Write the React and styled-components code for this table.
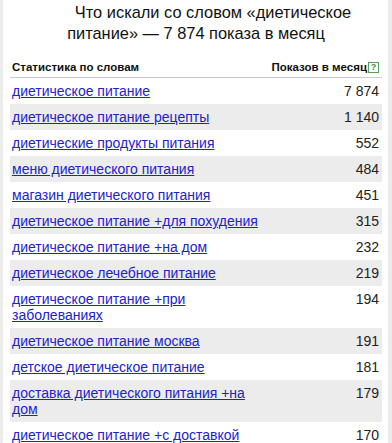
import React from "react";
import styled, { createGlobalStyle } from "styled-components";

const rows = [
  ["диетическое питание", "7 874"],
  ["диетическое питание рецепты", "1 140"],
  ["диетические продукты питания", "552"],
  ["меню диетического питания", "484"],
  ["магазин диетического питания", "451"],
  ["диетическое питание +для похудения", "315"],
  ["диетическое питание +на дом", "232"],
  ["диетическое лечебное питание", "219"],
  ["диетическое питание +при заболеваниях", "194"],
  ["диетическое питание москва", "191"],
  ["детское диетическое питание", "181"],
  ["доставка диетического питания +на дом", "179"],
  ["диетическое питание +с доставкой", "170"],
];

const GlobalStyle = createGlobalStyle`
  html, body {
    margin: 0;
    padding: 0;
    background: #ebebeb;
  }
  body {
    font-family: "Liberation Sans", Arial, sans-serif;
  }
`;

const Panel = styled.div`
  margin: 0 4px 0 3px;
  background: #fff;
  min-height: 443px;
  padding: 0 6px 0 7px;
  box-sizing: border-box;
`;

const Title = styled.h2`
  margin: 0;
  padding: 2px 0 16px;
  font-weight: normal;
  font-size: 16.4px;
  line-height: 21px;
  color: #111;
  text-align: center;
`;

const TitleLine = styled.span`
  display: block;
  padding-left: ${(p) => p.$shift || 0}px;
`;

const Table = styled.div`
  display: flex;
  flex-direction: column;
`;

const HeadRow = styled.div`
  display: flex;
  justify-content: space-between;
  align-items: center;
  padding: 0 3px 2px 2px;
  border-bottom: 1px solid #c8c8dc;
  font-size: 11.5px;
  font-weight: bold;
  line-height: 15px;
  color: #111;
`;

const HeadRight = styled.span`
  display: flex;
  align-items: center;
  gap: 1px;
`;

const Help = styled.span`
  display: inline-flex;
  align-items: center;
  justify-content: center;
  width: 9px;
  height: 9px;
  border: 1px solid #5aa05a;
  font-size: 9px;
  line-height: 9px;
  font-weight: bold;
  color: #3c8c3c;
`;

const Row = styled.div`
  display: flex;
  justify-content: space-between;
  align-items: flex-start;
  gap: 20px;
  padding: 5px 3px 5px 2px;
  background: ${(p) => (p.$odd ? "#ececec" : "#fff")};
  font-size: 14px;
  line-height: 16px;
`;

const Phrase = styled.a`
  color: #2222cc;
  text-decoration: underline;
  max-width: 262px;
`;

const Count = styled.span`
  color: #222;
  white-space: nowrap;
`;

export default function App() {
  return (
    <>
      <GlobalStyle />
      <Panel>
        <Title>
          <TitleLine $shift={34}>Что искали со словом «диетическое</TitleLine>
          <TitleLine>питание» — 7 874 показа в месяц</TitleLine>
        </Title>
        <Table>
          <HeadRow>
            <span>Статистика по словам</span>
            <HeadRight>
              Показов в месяц
              <Help>?</Help>
            </HeadRight>
          </HeadRow>
          {rows.map(([phrase, count], i) => (
            <Row key={phrase} $odd={i % 2 === 1}>
              <Phrase href="#">{phrase}</Phrase>
              <Count>{count}</Count>
            </Row>
          ))}
        </Table>
      </Panel>
    </>
  );
}
